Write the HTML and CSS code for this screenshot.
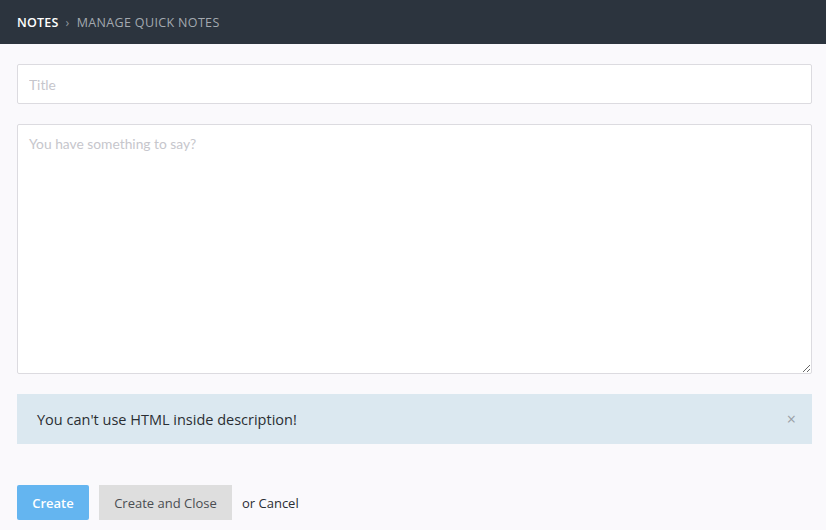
FILE: index.html
```html
<!DOCTYPE html>
<html>
<head>
<meta charset="utf-8">
<link rel="stylesheet" href="styles.css">
</head>
<body>
<header class="topbar">
  <span class="crumb-main">NOTES</span>
  <span class="crumb-sep">›</span>
  <span class="crumb-sub">MANAGE QUICK NOTES</span>
</header>
<main class="content">
  <input class="field title" type="text" placeholder="Title">
  <textarea class="field desc" placeholder="You have something to say?"></textarea>
  <div class="alert">
    <span>You can't use HTML inside description!</span>
    <span class="close">×</span>
  </div>
  <div class="actions">
    <button class="btn primary">Create</button>
    <button class="btn secondary">Create and Close</button>
    <span class="cancel">or Cancel</span>
  </div>
</main>
</body>
</html>
```
FILE: styles.css
```css
html, body {
  margin: 0;
  padding: 0;
  background: #faf9fc;
  font-family: "Open Sans", sans-serif;
}
.topbar {
  height: 44px;
  background: #2c343e;
  display: flex;
  align-items: center;
  padding: 0 17px;
  box-sizing: border-box;
  font-size: 12.5px;
  letter-spacing: 0.35px;
  gap: 7px;
}
.crumb-main { color: #ffffff; font-weight: 600; letter-spacing: 0.2px; }
.crumb-sep { color: #8d949c; }
.crumb-sub { color: #a3a9b0; }
.content {
  padding: 20px 15px 0 17px;
  display: flex;
  flex-direction: column;
}
.field {
  display: block;
  box-sizing: border-box;
  width: 795px;
  border: 1px solid #dcdbe0;
  border-radius: 2px;
  background: #fff;
  font-family: "Lato", sans-serif;
  font-size: 13.8px;
  padding: 0 11px;
  outline: none;
}
.field::placeholder { color: #c6c6cc; }
.title { height: 40px; }
.desc {
  margin-top: 20px;
  height: 250px;
  padding-top: 10px;
  resize: vertical;
}
.alert {
  margin-top: 20px;
  width: 795px;
  height: 50px;
  box-sizing: border-box;
  background: #dbe8f0;
  display: flex;
  align-items: center;
  justify-content: space-between;
  padding: 0 16px 0 20px;
  font-size: 14.5px;
  color: #2a2e33;
}
.close { color: #9aa0a6; font-size: 16px; }
.actions {
  margin-top: 41px;
  display: flex;
  align-items: center;
  gap: 10px;
}
.btn {
  height: 35px;
  border: none;
  border-radius: 2px;
  font-family: "Open Sans", sans-serif;
  font-size: 13px;
  padding: 0;
}
.primary { width: 72px; background: #64b5f0; color: #fff; font-weight: 600; }
.secondary { width: 133px; background: #dedede; color: #4a4d52; border-radius: 0; }
.cancel { font-size: 13px; color: #2a2e33; }
```
